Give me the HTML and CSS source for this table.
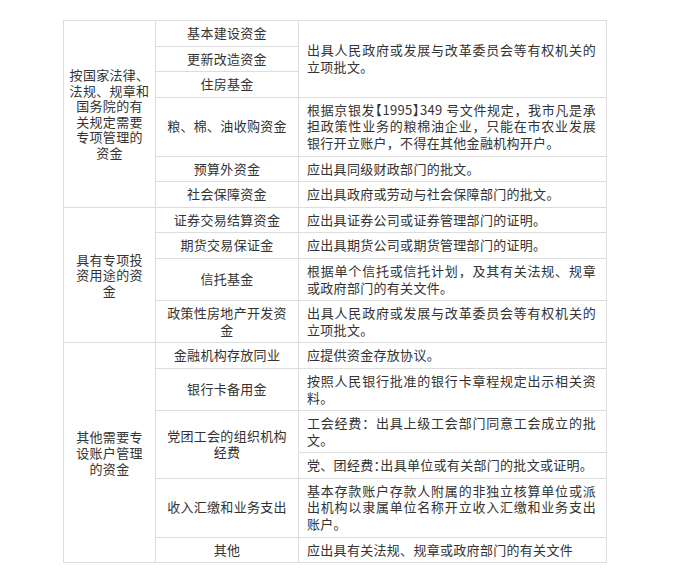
FILE: index.html
```html
<!DOCTYPE html>
<html lang="zh-CN">
<head>
<meta charset="utf-8">
<link rel="stylesheet" href="styles.css">
</head>
<body>
<div class="page">
<table class="funds">
  <colgroup>
    <col class="c1"><col class="c2"><col class="c3">
  </colgroup>
  <tbody>
    <tr>
      <td class="cat" rowspan="6">按国家法律、<br>法规、规章和<br>国务院的有<br>关规定需要<br>专项管理的<br>资金</td>
      <td class="name">基本建设资金</td>
      <td class="desc" rowspan="3">出具人民政府或发展与改革委员会等有权机关的立项批文。</td>
    </tr>
    <tr><td class="name">更新改造资金</td></tr>
    <tr><td class="name">住房基金</td></tr>
    <tr>
      <td class="name">粮、棉、油收购资金</td>
      <td class="desc">根据京银发<span class="half">【</span>1995<span class="half">】</span>349 号文件规定，我市凡是承担政策性业务的粮棉油企业，只能在市农业发展银行开立账户，不得在其他金融机构开户。</td>
    </tr>
    <tr><td class="name">预算外资金</td><td class="desc">应出具同级财政部门的批文。</td></tr>
    <tr><td class="name">社会保障资金</td><td class="desc">应出具政府或劳动与社会保障部门的批文。</td></tr>
    <tr>
      <td class="cat" rowspan="4">具有专项投<br>资用途的资<br>金</td>
      <td class="name">证券交易结算资金</td>
      <td class="desc">应出具证券公司或证券管理部门的证明。</td>
    </tr>
    <tr><td class="name">期货交易保证金</td><td class="desc">应出具期货公司或期货管理部门的证明。</td></tr>
    <tr><td class="name">信托基金</td><td class="desc">根据单个信托或信托计划，及其有关法规、规章或政府部门的有关文件。</td></tr>
    <tr><td class="name">政策性房地产开发资金</td><td class="desc">出具人民政府或发展与改革委员会等有权机关的立项批文。</td></tr>
    <tr>
      <td class="cat" rowspan="7">其他需要专<br>设账户管理<br>的资金</td>
      <td class="name">金融机构存放同业</td>
      <td class="desc">应提供资金存放协议。</td>
    </tr>
    <tr><td class="name">银行卡备用金</td><td class="desc">按照人民银行批准的银行卡章程规定出示相关资料。</td></tr>
    <tr>
      <td class="name" rowspan="2">党团工会的组织机构经费</td>
      <td class="desc">工会经费：出具上级工会部门同意工会成立的批文。</td>
    </tr>
    <tr><td class="desc">党、团经费<span class="half">：</span>出具单位或有关部门的批文或证明。</td></tr>
    <tr><td class="name">收入汇缴和业务支出</td><td class="desc">基本存款账户存款人附属的非独立核算单位或派出机构以隶属单位名称开立收入汇缴和业务支出账户。</td></tr>
    <tr><td class="name">其他</td><td class="desc">应出具有关法规、规章或政府部门的有关文件</td></tr>
  </tbody>
</table>
</div>
</body>
</html>
```
FILE: styles.css
```css
html, body {
  margin: 0;
  padding: 0;
  background: #ffffff;
}
.page {
  padding: 20px 0 0 63px;
}
.funds {
  border-collapse: collapse;
  table-layout: fixed;
  width: 543px;
  font-family: "Noto Sans CJK SC", "Noto Sans", sans-serif;
  font-size: 13px;
  line-height: 16.6px;
  letter-spacing: 0.3px;
  color: #333333;
}
.c1 { width: 92px; }
.c2 { width: 143px; }
.c3 { width: 308px; }
.funds td {
  border: 1px solid #dddddd;
  padding: 4px 8px;
  vertical-align: middle;
}
.funds td.cat {
  text-align: center;
  white-space: nowrap;
  padding: 4px 2px;
  line-height: 15.6px;
}
.funds td.name {
  text-align: center;
}
.funds td.desc {
  text-align: justify;
  letter-spacing: 0.3px;
  padding: 4px 10px 4px 8px;
}
.half {
  font-feature-settings: "halt";
}
```
